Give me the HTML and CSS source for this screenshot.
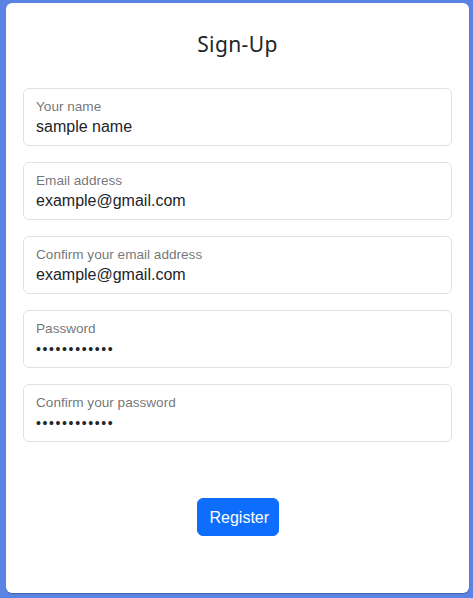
FILE: index.html
```html
<!DOCTYPE html>
<html>
<head>
<meta charset="utf-8">
<link rel="stylesheet" href="styles.css">
</head>
<body>
<div class="card">
  <h1 class="title">Sign-Up</h1>
  <form class="form">
    <div class="field">
      <div class="label">Your name</div>
      <div class="value">sample name</div>
    </div>
    <div class="field">
      <div class="label">Email address</div>
      <div class="value">example@gmail.com</div>
    </div>
    <div class="field">
      <div class="label">Confirm your email address</div>
      <div class="value">example@gmail.com</div>
    </div>
    <div class="field">
      <div class="label">Password</div>
      <div class="value dots">••••••••••••</div>
    </div>
    <div class="field">
      <div class="label">Confirm your password</div>
      <div class="value dots">••••••••••••</div>
    </div>
    <div class="actions">
      <button type="button" class="btn">Register</button>
    </div>
  </form>
</div>
</body>
</html>
```
FILE: styles.css
```css
html, body {
  margin: 0;
  padding: 0;
}
body {
  background: #5a83e4;
  height: 598px;
  box-sizing: border-box;
  padding: 3px 4px 5px 6px;
  font-family: "Liberation Sans", Arial, sans-serif;
  color: #212529;
}
.card {
  background: #fff;
  border-radius: 6px;
  height: 590px;
  box-sizing: border-box;
  padding: 28px 17px 0 17px;
  box-shadow: 0 1px 1px rgba(0,0,0,0.25);
}
.title {
  margin: 0;
  text-align: center;
  font-family: "Noto Sans", sans-serif;
  font-weight: 400;
  font-size: 21px;
  line-height: 26px;
  letter-spacing: 0.4px;
}
.form {
  margin-top: 31px;
  display: flex;
  flex-direction: column;
  gap: 16px;
}
.field {
  border: 1px solid #dee2e6;
  border-radius: 6px;
  height: 58px;
  box-sizing: border-box;
  padding: 9px 12px 0 12px;
}
.label {
  font-size: 13.6px;
  line-height: 18px;
  color: rgba(33,37,41,0.65);
}
.value {
  font-size: 16px;
  line-height: 22px;
  color: #212529;
}
.dots {
  font-size: 14px;
  letter-spacing: 1.62px;
  margin-top: 0;
}
.actions {
  display: flex;
  justify-content: center;
  margin-top: 40px;
}
.btn {
  background: #0d6efd;
  color: #fff;
  border: 1px solid #0d6efd;
  border-radius: 6px;
  font-family: "Liberation Sans", Arial, sans-serif;
  font-size: 16px;
  line-height: 24px;
  padding: 7px 12px 5px;
  width: 82px;
}
```
